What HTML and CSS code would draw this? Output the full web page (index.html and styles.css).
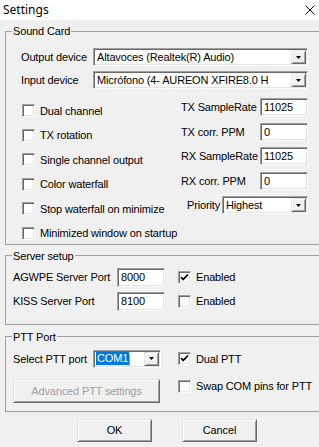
FILE: index.html
```html
<!DOCTYPE html>
<html lang="en">
<head>
    <meta charset="UTF-8">
    <title>Settings</title>
    <link rel="stylesheet" href="styles.css">
</head>
<body>

<div class="window">
    <div class="titlebar">
        <span class="title">Settings</span>
        <svg class="close" width="10" height="10" viewBox="0 0 10 10"><path d="M0.5 0.5 L9.5 9.5 M9.5 0.5 L0.5 9.5" stroke="#000" stroke-width="1" fill="none"/></svg>
    </div>

    <fieldset class="group sound">
        <legend>Sound Card</legend>
        <div class="device-row first">
            <span class="lbl">Output device</span>
            <div class="combo wide"><span class="combo-text">Altavoces (Realtek(R) Audio)</span><span class="drop"><svg width="5" height="3" viewBox="0 0 5 3"><polygon points="0,0 5,0 2.5,3" fill="#000"/></svg></span></div>
        </div>
        <div class="device-row">
            <span class="lbl">Input device</span>
            <div class="combo wide"><span class="combo-text">Micrófono (4- AUREON XFIRE8.0 H</span><span class="drop"><svg width="5" height="3" viewBox="0 0 5 3"><polygon points="0,0 5,0 2.5,3" fill="#000"/></svg></span></div>
        </div>

        <div class="sound-cols">
            <div class="checks">
                <div class="check-row"><span class="box"></span>Dual channel</div>
                <div class="check-row"><span class="box"></span>TX rotation</div>
                <div class="check-row"><span class="box"></span>Single channel output</div>
                <div class="check-row"><span class="box"></span>Color waterfall</div>
                <div class="check-row"><span class="box"></span>Stop waterfall on minimize</div>
                <div class="check-row"><span class="box"></span>Minimized window on startup</div>
            </div>
            <div class="params">
                <div class="param-row"><span class="lbl">TX SampleRate</span><div class="field">11025</div></div>
                <div class="param-row"><span class="lbl">TX corr. PPM</span><div class="field">0</div></div>
                <div class="param-row"><span class="lbl">RX SampleRate</span><div class="field">11025</div></div>
                <div class="param-row"><span class="lbl">RX corr. PPM</span><div class="field">0</div></div>
                <div class="param-row priority"><span class="lbl">Priority</span><div class="combo prio"><span class="combo-text">Highest</span><span class="drop"><svg width="5" height="3" viewBox="0 0 5 3"><polygon points="0,0 5,0 2.5,3" fill="#000"/></svg></span></div></div>
            </div>
        </div>
    </fieldset>

    <fieldset class="group server">
        <legend>Server setup</legend>
        <div class="server-body">
            <div class="srv-row">
                <span class="srv-lbl">AGWPE Server Port</span>
                <div class="field port">8000</div>
                <div class="check-row srv-check"><span class="box checked"><svg width="9" height="9" viewBox="0 0 9 9"><path d="M1 4 L3.2 6.4 L8 1.5" stroke="#000" stroke-width="1.7" fill="none"/></svg></span>Enabled</div>
            </div>
            <div class="srv-row">
                <span class="srv-lbl">KISS Server Port</span>
                <div class="field port">8100</div>
                <div class="check-row srv-check"><span class="box"></span>Enabled</div>
            </div>
        </div>
    </fieldset>

    <fieldset class="group ptt">
        <legend>PTT Port</legend>
        <div class="ptt-body">
            <div class="ptt-left">
                <div class="ptt-row">
                    <span class="ptt-lbl">Select PTT port</span>
                    <div class="combo com"><span class="combo-text"><span class="sel">COM1</span><span class="caret"></span></span><span class="drop"><svg width="5" height="3" viewBox="0 0 5 3"><polygon points="0,0 5,0 2.5,3" fill="#000"/></svg></span></div>
                </div>
                <div class="btn adv">Advanced PTT settings</div>
            </div>
            <div class="ptt-right">
                <div class="check-row dual"><span class="box checked"><svg width="9" height="9" viewBox="0 0 9 9"><path d="M1 4 L3.2 6.4 L8 1.5" stroke="#000" stroke-width="1.7" fill="none"/></svg></span>Dual PTT</div>
                <div class="check-row swap"><span class="box"></span>Swap COM pins for PTT</div>
            </div>
        </div>
    </fieldset>

    <div class="actions">
        <div class="btn">OK</div>
        <div class="btn">Cancel</div>
    </div>
</div>

</body>
</html>
```

FILE: styles.css
```css
* {
    box-sizing: border-box;
}

body {
    margin: 0;
    font-family: "Liberation Sans", Arial, sans-serif;
    font-size: 11px;
    letter-spacing: -0.15px;
    color: #000;
    background-color: #f0f0f0;
}

.window {
    width: 319px;
    height: 447px;
    overflow: hidden;
    background-color: #f0f0f0;
}

.titlebar {
    height: 20px;
    background-color: #fff;
    display: flex;
    align-items: center;
    justify-content: space-between;
    padding: 0 4px 1px 3px;
}
.title {
    font-family: "Noto Sans", "Open Sans", sans-serif;
    font-size: 12px;
    letter-spacing: 0;
}

/* group boxes */
.group {
    margin: 4px 0 0 5px;
    padding: 0;
    width: 340px;
    min-width: 0;
    border: 1px solid #a0a0a0;
}
.group legend {
    margin-left: 6px;
    padding: 0 1px;
    line-height: 14px;
    height: 14px;
}
.server {
    margin-top: 4px;
}
.ptt {
    margin-top: 5px;
}

/* inputs */
.combo, .field {
    display: flex;
    align-items: center;
    height: 18px;
    background-color: #fff;
    border: 1px solid;
    border-color: #a0a0a0 #fff #fff #a0a0a0;
    box-shadow: inset 1px 1px #696969, inset -1px -1px #e3e3e3;
    white-space: nowrap;
}
.combo {
    padding: 0 1px 0 3px;
}
.field {
    width: 48px;
    padding-left: 3px;
}
.combo-text {
    flex: 1;
    overflow: hidden;
}
.drop {
    width: 15px;
    height: 14px;
    display: flex;
    align-items: center;
    justify-content: center;
    background-color: #f0f0f0;
    border: 1px solid;
    border-color: #e3e3e3 #696969 #696969 #e3e3e3;
    box-shadow: inset 1px 1px #fff, inset -1px -1px #a0a0a0;
}

.box {
    width: 13px;
    height: 13px;
    margin-right: 5px;
    flex: none;
    display: flex;
    align-items: center;
    justify-content: center;
    background-color: #fff;
    border: 1px solid;
    border-color: #a0a0a0 #fff #fff #a0a0a0;
    box-shadow: inset 1px 1px #696969, inset -1px -1px #e3e3e3;
}
.check-row {
    display: flex;
    align-items: center;
    height: 13px;
    white-space: nowrap;
}

/* sound card */
.device-row {
    display: flex;
    align-items: center;
    height: 18px;
    padding-left: 15px;
    margin-top: 5px;
}
.device-row.first {
    margin-top: 10px;
}
.device-row .lbl {
    width: 72px;
}
.combo.wide {
    width: 215px;
}
.sound-cols {
    display: flex;
    padding-bottom: 4px;
}
.checks {
    width: 175px;
    padding: 15px 0 0 16px;
    display: flex;
    flex-direction: column;
    gap: 11.6px;
}
.params {
    width: 127px;
    padding-top: 9px;
    display: flex;
    flex-direction: column;
    gap: 6.5px;
}
.param-row {
    display: flex;
    align-items: center;
    justify-content: space-between;
    height: 18px;
    white-space: nowrap;
}
.priority .lbl {
    padding-left: 6px;
}
.combo.prio {
    width: 86px;
}

/* server setup */
.server-body {
    padding: 5px 0 13px 7px;
    display: flex;
    flex-direction: column;
    gap: 5px;
}
.srv-row {
    display: flex;
    align-items: center;
    height: 19px;
}
.srv-lbl {
    width: 104px;
}
.field.port {
    height: 19px;
}
.srv-check {
    margin-left: 13px;
}

/* ptt port */
.ptt-body {
    display: flex;
    padding: 6px 0 8px 7px;
}
.ptt-row {
    display: flex;
    align-items: center;
    height: 18px;
}
.ptt-lbl {
    width: 80px;
}
.combo.com {
    width: 68px;
    padding-left: 2px;
}
.sel {
    background-color: #0078d7;
    color: #fff;
    padding: 1px 1px;
}
.caret {
    display: inline-block;
    width: 1px;
    height: 12px;
    background-color: #ff8c00;
    vertical-align: middle;
}
.ptt-right {
    margin-left: 17px;
}
.dual {
    height: 18px;
}
.swap {
    margin-top: 12px;
}

/* buttons */
.btn {
    display: flex;
    align-items: center;
    justify-content: center;
    width: 75px;
    height: 23px;
    background-color: #f0f0f0;
    border: 1px solid;
    border-color: #e3e3e3 #696969 #696969 #e3e3e3;
    box-shadow: inset 1px 1px #fff, inset -1px -1px #a0a0a0;
}
.btn.adv {
    width: 147px;
    height: 24px;
    margin-top: 11px;
    color: #a0a0a0;
}
.actions {
    display: flex;
    gap: 30px;
    padding-left: 77px;
    margin-top: 7px;
}
```
